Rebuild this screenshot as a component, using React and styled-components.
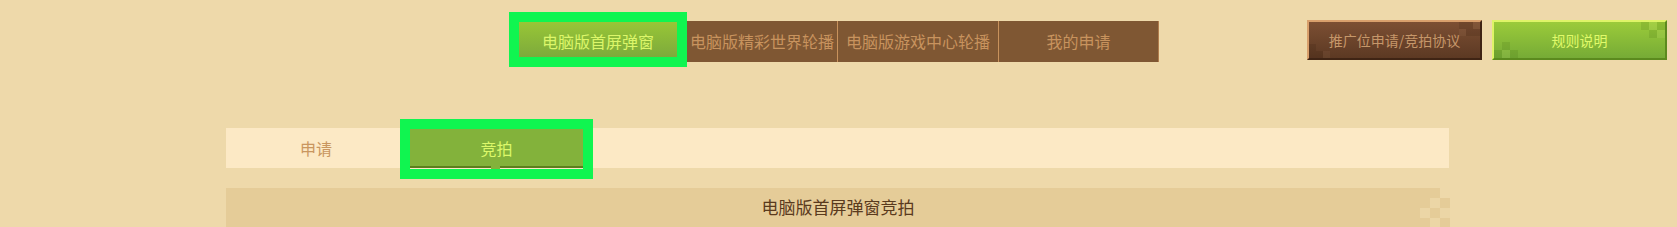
import React from 'react';
import styled, { createGlobalStyle } from 'styled-components';

const GlobalStyle = createGlobalStyle`
  html, body {
    margin: 0;
    padding: 0;
    background: #eed9aa;
  }
  body {
    font-family: "Noto Sans CJK SC", "Microsoft YaHei", sans-serif;
  }
`;

const Page = styled.div`
  width: 1677px;
  height: 227px;
  overflow: hidden;
  background: #eed9aa;
`;

const Header = styled.div`
  display: flex;
  align-items: flex-start;
  height: 70px;
  padding: 12px 10px 0 509px;
  box-sizing: border-box;
`;

const TabBar = styled.div`
  display: flex;
  align-items: flex-start;
`;

const ActiveTab = styled.div`
  box-sizing: border-box;
  width: 178px;
  height: 55px;
  border: 10px solid #10f550;
  background: linear-gradient(#98c636, #7daa3c);
  color: #dcf66a;
  font-size: 16px;
  display: flex;
  align-items: center;
  justify-content: center;
  padding-top: 2px;
`;

const Tab = styled.div`
  box-sizing: border-box;
  width: ${(p) => p.$w}px;
  height: 41px;
  margin-top: 9px;
  background: #7f5733;
  color: #c8935e;
  font-size: 16px;
  display: flex;
  align-items: center;
  justify-content: center;
  padding-bottom: 1px;
  border-left: ${(p) => (p.$sep ? '1px solid #c8925c' : 'none')};
  border-right: ${(p) => (p.$last ? '1px solid #b07c4c' : 'none')};
`;

const Actions = styled.div`
  display: flex;
  gap: 10px;
  margin-left: auto;
  margin-top: 8px;
`;

const Button = styled.div`
  position: relative;
  box-sizing: border-box;
  width: 175px;
  height: 40px;
  border-style: solid;
  border-width: 2px;
  border-color: ${(p) => (p.$green ? '#dff468 #5b8a1e #5b8a1e #dff468' : '#d9a06c #3f2414 #3f2414 #d9a06c')};
  background: ${(p) => (p.$green ? 'linear-gradient(#9bcb3a, #76ab36)' : 'linear-gradient(#7c4f33, #5c3923)')};
  color: ${(p) => (p.$green ? '#e0fa6a' : '#c6976a')};
  font-size: 14px;
  display: flex;
  align-items: center;
  justify-content: center;
  overflow: hidden;
`;

const ButtonLabel = styled.span`
  position: relative;
  z-index: 1;
`;

const Pixels = styled.svg`
  position: absolute;
  ${(p) => (p.$corner === 'tr' ? 'top: 0; right: 0;' : 'bottom: 0; left: 0;')}
`;

const SubBar = styled.div`
  display: flex;
  align-items: flex-start;
  margin: 58px 0 0 226px;
  width: 1223px;
  height: 40px;
  background: #fce9c5;
`;

const SubTab = styled.div`
  box-sizing: border-box;
  width: 174px;
  height: 40px;
  padding-left: 6px;
  display: flex;
  align-items: center;
  justify-content: center;
  color: #c9965f;
  font-size: 16px;
`;

const ActiveSubTab = styled.div`
  position: relative;
  box-sizing: border-box;
  width: 193px;
  height: 60px;
  margin-top: -9px;
  border: 10px solid #10f550;
  background: linear-gradient(to bottom, #83b23b 0 37px, #5d7e1d 37px 39px, #fce9c5 39px 40px);
  color: #dcf86a;
  font-size: 16px;
  display: flex;
  align-items: center;
  justify-content: center;
  padding-bottom: 3px;

  &::after {
    content: '';
    position: absolute;
    left: 81px;
    top: 37px;
    width: 9px;
    height: 3px;
    background: #83b23b;
  }
`;

const Panel = styled.div`
  position: relative;
  margin: 20px 0 0 226px;
  width: 1214px;
  height: 60px;
  background: #e5cc98;
`;

const PanelTitle = styled.div`
  padding: 7px 0 0 10px;
  line-height: 24px;
  text-align: center;
  font-size: 17px;
  color: #5a3a1d;
`;

const PanelCorner = styled.svg`
  position: absolute;
  top: 0;
  right: -10px;
`;

const PixelCorner = ({ corner, size, cells }) => (
  <Pixels $corner={corner} width={size * 4} height={size * 3}>
    {cells.map(([x, y, c], i) => (
      <rect key={i} x={x * size} y={y * size} width={size} height={size} fill={c} />
    ))}
  </Pixels>
);

const darkB = 'rgba(40,20,8,0.14)';
const lightB = 'rgba(255,220,180,0.05)';
const darkG = 'rgba(40,80,0,0.12)';
const lightG = 'rgba(255,255,180,0.08)';

const App = () => {
  return (
    <Page>
      <GlobalStyle />
      <Header>
        <TabBar>
          <ActiveTab>电脑版首屏弹窗</ActiveTab>
          <Tab $w={150}>电脑版精彩世界轮播</Tab>
          <Tab $w={161} $sep>电脑版游戏中心轮播</Tab>
          <Tab $w={161} $sep $last>我的申请</Tab>
        </TabBar>
        <Actions>
          <Button>
            <PixelCorner
              corner="tr"
              size={7}
              cells={[[1, 0, darkB], [3, 0, lightB], [2, 0, darkB], [2, 1, darkB], [3, 1, darkB], [1, 1, lightB]]}
            />
            <PixelCorner
              corner="bl"
              size={7}
              cells={[[0, 1, darkB], [1, 2, darkB], [0, 2, darkB], [2, 2, lightB]]}
            />
            <ButtonLabel>推广位申请/竞拍协议</ButtonLabel>
          </Button>
          <Button $green>
            <PixelCorner
              corner="tr"
              size={8}
              cells={[[1, 0, darkG], [2, 0, lightG], [3, 0, darkG], [2, 1, darkG], [3, 1, lightG]]}
            />
            <PixelCorner
              corner="bl"
              size={8}
              cells={[[1, 1, darkG], [0, 2, darkG], [1, 2, lightG], [2, 2, darkG]]}
            />
            <ButtonLabel>规则说明</ButtonLabel>
          </Button>
        </Actions>
      </Header>

      <SubBar>
        <SubTab>申请</SubTab>
        <ActiveSubTab>竞拍</ActiveSubTab>
      </SubBar>

      <Panel>
        <PanelTitle>电脑版首屏弹窗竞拍</PanelTitle>
        <PanelCorner width="30" height="40">
          <rect x="0" y="0" width="20" height="10" fill="#e5cc98" />
          <rect x="10" y="10" width="10" height="10" fill="#ecd6a6" />
          <rect x="20" y="10" width="10" height="10" fill="#e5cc98" />
          <rect x="0" y="20" width="10" height="10" fill="#ecd6a6" />
          <rect x="10" y="20" width="10" height="10" fill="#e5cc98" />
          <rect x="20" y="20" width="10" height="10" fill="#ecd6a6" />
          <rect x="10" y="30" width="10" height="10" fill="#ecd6a6" />
          <rect x="20" y="30" width="10" height="10" fill="#e5cc98" />
        </PanelCorner>
      </Panel>
    </Page>
  );
};

export default App;
